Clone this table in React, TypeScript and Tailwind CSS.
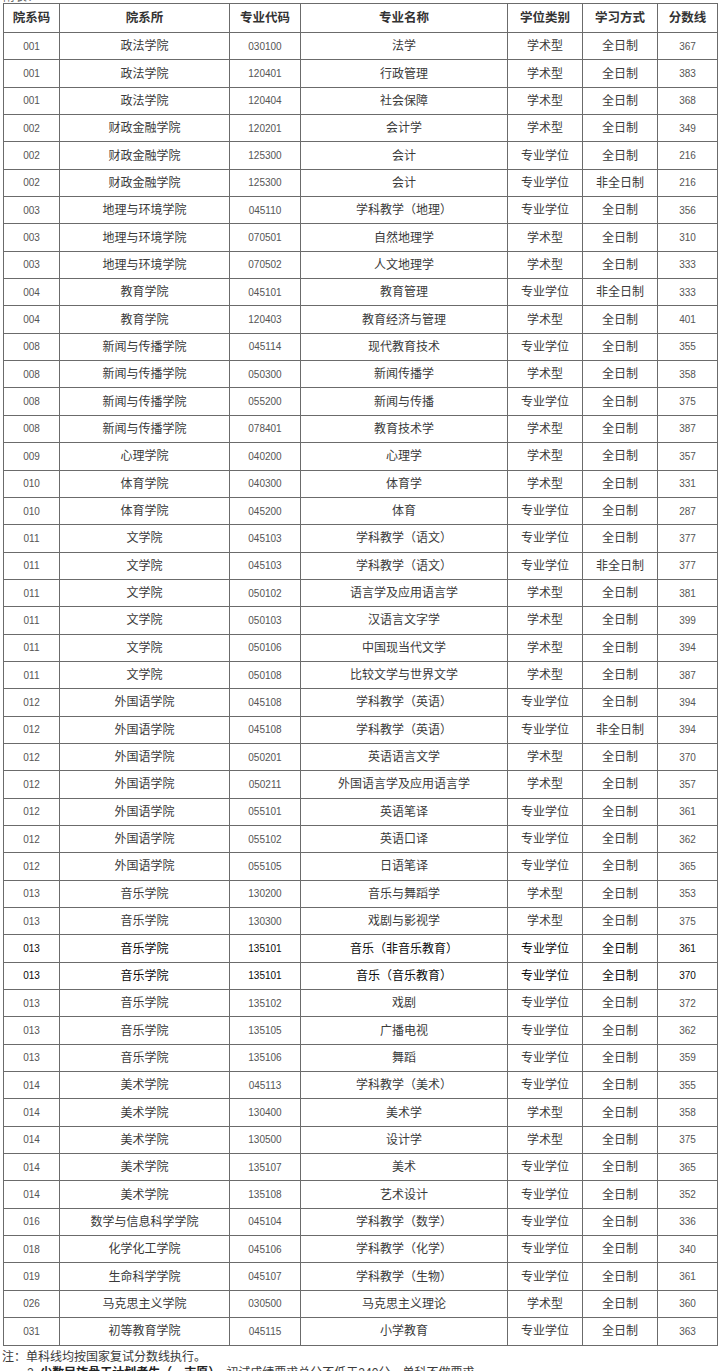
type Row = [string, string, string, string, string, string, string];

const rows: Row[] = [
  ["001", "政法学院", "030100", "法学", "学术型", "全日制", "367"],
  ["001", "政法学院", "120401", "行政管理", "学术型", "全日制", "383"],
  ["001", "政法学院", "120404", "社会保障", "学术型", "全日制", "368"],
  ["002", "财政金融学院", "120201", "会计学", "学术型", "全日制", "349"],
  ["002", "财政金融学院", "125300", "会计", "专业学位", "全日制", "216"],
  ["002", "财政金融学院", "125300", "会计", "专业学位", "非全日制", "216"],
  ["003", "地理与环境学院", "045110", "学科教学（地理）", "专业学位", "全日制", "356"],
  ["003", "地理与环境学院", "070501", "自然地理学", "学术型", "全日制", "310"],
  ["003", "地理与环境学院", "070502", "人文地理学", "学术型", "全日制", "333"],
  ["004", "教育学院", "045101", "教育管理", "专业学位", "非全日制", "333"],
  ["004", "教育学院", "120403", "教育经济与管理", "学术型", "全日制", "401"],
  ["008", "新闻与传播学院", "045114", "现代教育技术", "专业学位", "全日制", "355"],
  ["008", "新闻与传播学院", "050300", "新闻传播学", "学术型", "全日制", "358"],
  ["008", "新闻与传播学院", "055200", "新闻与传播", "专业学位", "全日制", "375"],
  ["008", "新闻与传播学院", "078401", "教育技术学", "学术型", "全日制", "387"],
  ["009", "心理学院", "040200", "心理学", "学术型", "全日制", "357"],
  ["010", "体育学院", "040300", "体育学", "学术型", "全日制", "331"],
  ["010", "体育学院", "045200", "体育", "专业学位", "全日制", "287"],
  ["011", "文学院", "045103", "学科教学（语文）", "专业学位", "全日制", "377"],
  ["011", "文学院", "045103", "学科教学（语文）", "专业学位", "非全日制", "377"],
  ["011", "文学院", "050102", "语言学及应用语言学", "学术型", "全日制", "381"],
  ["011", "文学院", "050103", "汉语言文字学", "学术型", "全日制", "399"],
  ["011", "文学院", "050106", "中国现当代文学", "学术型", "全日制", "394"],
  ["011", "文学院", "050108", "比较文学与世界文学", "学术型", "全日制", "387"],
  ["012", "外国语学院", "045108", "学科教学（英语）", "专业学位", "全日制", "394"],
  ["012", "外国语学院", "045108", "学科教学（英语）", "专业学位", "非全日制", "394"],
  ["012", "外国语学院", "050201", "英语语言文学", "学术型", "全日制", "370"],
  ["012", "外国语学院", "050211", "外国语言学及应用语言学", "学术型", "全日制", "357"],
  ["012", "外国语学院", "055101", "英语笔译", "专业学位", "全日制", "361"],
  ["012", "外国语学院", "055102", "英语口译", "专业学位", "全日制", "362"],
  ["012", "外国语学院", "055105", "日语笔译", "专业学位", "全日制", "365"],
  ["013", "音乐学院", "130200", "音乐与舞蹈学", "学术型", "全日制", "353"],
  ["013", "音乐学院", "130300", "戏剧与影视学", "学术型", "全日制", "375"],
  ["013", "音乐学院", "135101", "音乐（非音乐教育）", "专业学位", "全日制", "361"],
  ["013", "音乐学院", "135101", "音乐（音乐教育）", "专业学位", "全日制", "370"],
  ["013", "音乐学院", "135102", "戏剧", "专业学位", "全日制", "372"],
  ["013", "音乐学院", "135105", "广播电视", "专业学位", "全日制", "362"],
  ["013", "音乐学院", "135106", "舞蹈", "专业学位", "全日制", "359"],
  ["014", "美术学院", "045113", "学科教学（美术）", "专业学位", "全日制", "355"],
  ["014", "美术学院", "130400", "美术学", "学术型", "全日制", "358"],
  ["014", "美术学院", "130500", "设计学", "学术型", "全日制", "375"],
  ["014", "美术学院", "135107", "美术", "专业学位", "全日制", "365"],
  ["014", "美术学院", "135108", "艺术设计", "专业学位", "全日制", "352"],
  ["016", "数学与信息科学学院", "045104", "学科教学（数学）", "专业学位", "全日制", "336"],
  ["018", "化学化工学院", "045106", "学科教学（化学）", "专业学位", "全日制", "340"],
  ["019", "生命科学学院", "045107", "学科教学（生物）", "专业学位", "全日制", "361"],
  ["026", "马克思主义学院", "030500", "马克思主义理论", "学术型", "全日制", "360"],
  ["031", "初等教育学院", "045115", "小学教育", "专业学位", "全日制", "363"],
];

const headers = ["院系码", "院系所", "专业代码", "专业名称", "学位类别", "学习方式", "分数线"];
const widths = ["w-[56px]", "w-[170px]", "w-[71px]", "w-[207px]", "w-[75px]", "w-[75px]", "w-[60px]"];
// columns holding digits use the smaller latin face
const numeric = [true, false, true, false, false, false, true];

export default function App() {
  return (
    <div className="w-[720px] bg-white text-[#3a3a3a] font-['Liberation_Sans','Noto_Sans_CJK_SC',sans-serif]">
      <div className="h-[3px] overflow-hidden pl-[3px] text-[12px] leading-[12px] text-[#666]">
        <div className="-mt-[9px]">附表：</div>
      </div>
      <table className="ml-[3px] w-[714px] table-fixed border-collapse">
        <colgroup>
          {widths.map((w, i) => (
            <col key={i} className={w} />
          ))}
        </colgroup>
        <thead>
          <tr className="h-[29px]">
            {headers.map((h) => (
              <th
                key={h}
                className="border border-[#6b6b6b] p-0 text-center align-middle text-[12.5px] font-semibold text-[#333]"
              >
                {h}
              </th>
            ))}
          </tr>
        </thead>
        <tbody>
          {rows.map((r, idx) => {
            const strong = idx === 33 || idx === 34;
            return (
              <tr key={idx} className="h-[27.35px]">
                {r.map((cell, i) => (
                  <td
                    key={i}
                    className={
                      "border border-[#6b6b6b] p-0 text-center align-middle " +
                      (numeric[i] ? "text-[10px] " : "text-[12px] ") +
                      (strong ? "text-[#0a0a0a]" : numeric[i] ? "text-[#555]" : "text-[#3a3a3a]")
                    }
                  >
                    {cell}
                  </td>
                ))}
              </tr>
            );
          })}
        </tbody>
      </table>
      <div className="pl-[2px] pt-[3px] text-[12px] leading-[16px] text-[#3a3a3a]">
        <p>注：单科线均按国家复试分数线执行。</p>
        <p className="pl-[25px]">
          2.&nbsp;<span className="font-bold text-[#222]">少数民族骨干计划考生（一志愿）</span>，初试成绩要求总分不低于240分，单科不做要求。
        </p>
      </div>
    </div>
  );
}
